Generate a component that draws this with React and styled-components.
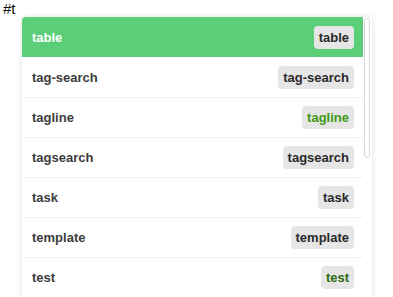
import React from 'react';
import styled, { createGlobalStyle } from 'styled-components';


// global
const GlobalStyle = createGlobalStyle`
  body {
    margin: 0;
    background: #fff;
    font-family: "Liberation Sans", Arial, sans-serif;
  }
`


// styled-components
const Page = styled.div`
  height: 297px;
  overflow: hidden;
  padding: 1px 0 0 3px;
`

const Query = styled.div`
  font-size: 15px;
  line-height: 16px;
  color: #111;
`

const Popup = styled.div`
  margin: 0 0 0 19px;
  width: 350px;
  display: flex;
  background: #fff;
  border-radius: 4px 4px 0 0;
  box-shadow: 0 0 6px rgba(0, 0, 0, 0.12);
  overflow: hidden;
`

const List = styled.ul`
  list-style: none;
  margin: 0;
  padding: 0;
  flex: 1;
`

const Item = styled.li`
  height: 40px;
  display: flex;
  align-items: center;
  justify-content: space-between;
  padding: 0 9px 0 10px;
  box-sizing: border-box;
  background: ${p => (p.active ? '#5bcf78' : '#fff')};
  border-top: ${p => (p.first ? 'none' : '1px solid #efefef')};
  margin-left: ${p => (p.active ? '0' : '2px')};
`

const Label = styled.span`
  font-size: 13px;
  font-weight: bold;
  color: ${p => (p.active ? '#fff' : '#3c3c3c')};
  margin-left: ${p => (p.active ? '0' : '-2px')};
`

const Badge = styled.span`
  font-size: 13px;
  font-weight: bold;
  line-height: 15px;
  padding: 4px 5px;
  border-radius: 4px;
  background: #e6e6e6;
  color: ${p => p.tone || '#2a2a2a'};
`

const ScrollTrack = styled.div`
  width: 9px;
  padding: 1px 2px 0 1px;
  box-sizing: border-box;
  background: #fff;
`

const ScrollThumb = styled.div`
  height: 138px;
  border: 1px solid #d8d8d8;
  border-radius: 3px;
  background: #fff;
`


const items = [
  { name: 'table' },
  { name: 'tag-search' },
  { name: 'tagline', tone: '#3f9a16' },
  { name: 'tagsearch' },
  { name: 'task' },
  { name: 'template' },
  { name: 'test', tone: '#2d6b14' },
];


// components
const App = () => {
  return (
    <Page>
      <GlobalStyle />
      <Query>#t</Query>
      <Popup>
        <List>
          {items.map((item, i) => (
            <Item key={item.name} active={i === 0} first={i <= 1}>
              <Label active={i === 0}>{item.name}</Label>
              <Badge tone={item.tone}>{item.name}</Badge>
            </Item>
          ))}
        </List>
        <ScrollTrack>
          <ScrollThumb />
        </ScrollTrack>
      </Popup>
    </Page>
  );
}


export default App;
